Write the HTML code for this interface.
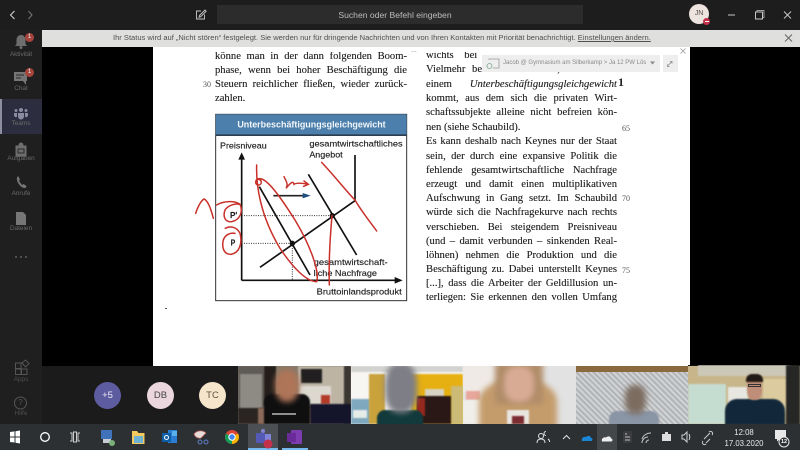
<!DOCTYPE html>
<html lang="de"><head><meta charset="utf-8"><title>Teams</title>
<style>
html,body{margin:0;padding:0;width:800px;height:450px;overflow:hidden;background:#1c1b1b}
*{box-sizing:border-box}
body{font-family:"Liberation Sans",sans-serif;position:relative}
.a{position:absolute}
.l{position:absolute;font-family:"Liberation Serif",serif;font-size:10.6px;line-height:14px;height:14px;color:#1c1c1c;white-space:nowrap;text-align:justify;text-align-last:justify;-webkit-text-stroke:.12px #1c1c1c}
.n{text-align:left;text-align-last:left}
.num{position:absolute;font-family:"Liberation Serif",serif;font-size:8px;color:#555;line-height:10px}
.nav{position:absolute;left:0;width:42px;text-align:center;font-size:6.4px;color:#6b6a6a;line-height:8px}
.av{position:absolute;top:382px;width:27px;height:27px;border-radius:50%;text-align:center;line-height:27px;font-size:9.5px;color:#444}
.tile{position:absolute;top:366px;height:58px;overflow:hidden}
.b{position:absolute;filter:blur(.8px)}
.bb{position:absolute;filter:blur(3px)}
svg{position:absolute;overflow:visible}
</style></head><body>

<!-- top bar -->
<div class="a" style="left:0;top:0;width:800px;height:30px;background:#1e1d1d"></div>
<div class="a" style="left:217px;top:5px;width:366px;height:19px;background:#2d2c2c"></div>
<div class="a" style="left:212px;top:5px;width:366px;height:19px;text-align:center;line-height:20px;font-size:8.6px;color:#bdbcbc">Suchen oder Befehl eingeben</div>
<svg style="left:0;top:0" width="800" height="30" fill="none" stroke="#c8c8c8">
<path d="M14.500 11 10.500 15 14.500 19" stroke="#d8d8d8"/><path d="M28.500 11 32 15 28.500 19" stroke="#777"/>
<path d="M201 11h-4.500v8h8v-4.500M199.500 15.500l5.500-5.500 1.200 1.200-5.500 5.500-1.700.5z" stroke-width=".9"/>
<path d="M728 15h7" stroke-width="1"/><path d="M755.500 12h7v7h-7z" stroke-width="1"/><path d="M757 12v-1.500h7v7h-1.500" stroke-width=".7"/>
<path d="M784 11.500l7 7M791 11.500l-7 7" stroke-width="1"/>
</svg>
<div class="a" style="left:689px;top:4px;width:20px;height:20px;border-radius:50%;background:#ede3df;text-align:center;line-height:20px;font-size:7px;color:#5a4a45">JN</div>
<div class="a" style="left:703px;top:18px;width:7px;height:7px;border-radius:50%;background:#c4314b"></div>
<div class="a" style="left:704.500px;top:21px;width:4px;height:1px;background:#fff"></div>

<!-- sidebar -->
<div class="a" style="left:0;top:30px;width:42px;height:394px;background:#201f1f"></div>
<div class="a" style="left:0;top:99px;width:42px;height:35px;background:#2c2d3f"></div>
<div class="a" style="left:0;top:99px;width:2px;height:35px;background:#8e8e9e"></div>
<svg style="left:0;top:0" width="42" height="424">
<path d="M21 35c-3 0-4.500 2.500-4.500 5v4l-1.500 2h12l-1.500-2v-4c0-2.500-1.500-5-4.500-5z" fill="#6f6e6e"/><circle cx="21" cy="47.500" r="1.500" fill="#6f6e6e"/>
<path d="M14 72h13v9h-1v4l-3-4h-9z" fill="#767575"/><path d="M16 75h8M16 78h5" stroke="#2a2929"/>
<g fill="#8a8aa0"><circle cx="21" cy="110" r="2"/><circle cx="16" cy="110.500" r="1.500"/><circle cx="26" cy="110.500" r="1.500"/><path d="M18 113h6v3.500a3 3 0 0 1-6 0zM14 113h3v3.500l-1 1-2-1.500zM25 113h3v3l-2 1.500-1-1z"/></g>
<path d="M16 146h10v10h-10zM19 146c0-4 4-4 4 0" fill="#6f6e6e" stroke="#6f6e6e"/><rect x="18" y="149" width="6" height="4" fill="none" stroke="#2a2929"/>
<path d="M17 178c-1 3 3 9 7 10 2 0 2.500-1 2.500-2l-3-2-1.500 1-3-4 1-1.500-1.500-3c-.5-.5-1.500 0-1.500 1.500z" fill="#767575"/>
<path d="M16 212h7l3 3v10h-10z" fill="#777676"/>
<g fill="#5f5e5e"><circle cx="16" cy="257" r="1"/><circle cx="21" cy="257" r="1"/><circle cx="26" cy="257" r="1"/></g>
<g fill="none" stroke="#555"><path d="M15.500 363h5.500v5.500h-5.500zM15.500 369h5.500v5.500h-5.500zM21.500 369h5.500v5.500h-5.500zM22 363l3.500-3 3.500 3.500-3.500 3.500z"/><circle cx="20.500" cy="403" r="6"/></g>
</svg>
<div class="nav" style="top:51px">Aktivität</div>
<div class="nav" style="top:85px">Chat</div>
<div class="nav" style="top:120px">Teams</div>
<div class="nav" style="top:155px">Aufgaben</div>
<div class="nav" style="top:190px">Anrufe</div>
<div class="nav" style="top:225px">Dateien</div>
<div class="nav" style="top:376px;color:#4f4e4e">Apps</div>
<div class="nav" style="top:410px;color:#4f4e4e">Hilfe</div>
<div class="a" style="left:25px;top:33px;width:9px;height:9px;border-radius:50%;background:#a5453c;color:#eee;font-size:6px;line-height:9px;text-align:center">1</div>
<div class="a" style="left:25px;top:68px;width:9px;height:9px;border-radius:50%;background:#a5453c;color:#eee;font-size:6px;line-height:9px;text-align:center">1</div>
<div class="a" style="left:16.500px;top:398px;color:#555;font-size:8px;width:8px;text-align:center;line-height:10px">?</div>

<!-- main -->
<div class="a" style="left:42px;top:47px;width:758px;height:319px;background:#000"></div>
<div class="a" style="left:153px;top:47px;width:537px;height:319px;background:#fff"></div>

<!-- page text, left column -->
<div class="l" style="left:215px;top:50px;width:192px">könne man in der dann folgenden Boom-</div>
<div class="l" style="left:215px;top:64px;width:192px">phase, wenn bei hoher Beschäftigung die</div>
<div class="l" style="left:215px;top:78px;width:192px">Steuern reichlicher fließen, wieder zurück-</div>
<div class="l n" style="left:215px;top:92px;width:192px">zahlen.</div>
<div class="num" style="left:203px;top:80px">30</div>

<!-- page text, right column -->
<div class="l n" style="left:426px;top:49px;width:60px;word-spacing:8px">wichts bei</div>
<div class="l" style="left:426px;top:63px;width:191px">Vielmehr besteht die Gefahr, dass es zu</div>
<div class="l" style="left:426px;top:78px;width:191px">einem <i>Unterbeschäftigungsgleichgewicht</i></div>
<div class="a" style="left:618px;top:75px;font-family:'Liberation Serif',serif;font-weight:bold;font-size:12px;color:#222">1</div>
<div class="l" style="left:426px;top:92px;width:191px">kommt, aus dem sich die privaten Wirt-</div>
<div class="l" style="left:426px;top:106px;width:191px">schaftssubjekte alleine nicht befreien kön-</div>
<div class="l n" style="left:426px;top:121px;width:191px">nen (siehe Schaubild).</div>
<div class="num" style="left:622px;top:124px">65</div>
<div class="l" style="left:426px;top:135px;width:191px">Es kann deshalb nach Keynes nur der Staat</div>
<div class="l" style="left:426px;top:150px;width:191px">sein, der durch eine expansive Politik die</div>
<div class="l" style="left:426px;top:164px;width:191px">fehlende gesamtwirtschaftliche Nachfrage</div>
<div class="l" style="left:426px;top:178px;width:191px">erzeugt und damit einen multiplikativen</div>
<div class="l" style="left:426px;top:192px;width:191px">Aufschwung in Gang setzt. Im Schaubild</div>
<div class="num" style="left:622px;top:194px">70</div>
<div class="l" style="left:426px;top:206px;width:191px">würde sich die Nachfragekurve nach rechts</div>
<div class="l" style="left:426px;top:221px;width:191px">verschieben. Bei steigendem Preisniveau</div>
<div class="l" style="left:426px;top:235px;width:191px">(und – damit verbunden – sinkenden Real-</div>
<div class="l" style="left:426px;top:249px;width:191px">löhnen) nehmen die Produktion und die</div>
<div class="l" style="left:426px;top:263px;width:191px">Beschäftigung zu. Dabei unterstellt Keynes</div>
<div class="num" style="left:622px;top:266px">75</div>
<div class="l" style="left:426px;top:277px;width:191px">[...], dass die Arbeiter der Geldillusion un-</div>
<div class="l" style="left:426px;top:291px;width:191px">terliegen: Sie erkennen den vollen Umfang</div>

<!-- clip of first lines -->
<div class="a" style="left:200px;top:47px;width:300px;height:5px;background:#fff"></div>

<!-- status bar -->
<div class="a" style="left:42px;top:30px;width:758px;height:17px;background:#dfdfdd"></div>
<div class="a" style="left:113px;top:30px;height:17px;line-height:16px;font-size:7.55px;color:#505050;white-space:nowrap">Ihr Status wird auf „Nicht stören“ festgelegt. Sie werden nur für dringende Nachrichten und von Ihren Kontakten mit Priorität benachrichtigt. <u>Einstellungen ändern.</u></div>
<svg style="left:783px;top:32px" width="12" height="12" fill="none" stroke="#666"><path d="M2 2.500l7 7M9 2.500l-7 7"/></svg>

<!-- share pill -->
<div class="a" style="left:482px;top:55px;width:178px;height:17px;background:#eeeeee"></div>
<div class="a" style="left:663px;top:55px;width:15px;height:17px;background:#eeeeee"></div>
<div class="a" style="left:503px;top:55px;height:17px;line-height:17px;font-size:6px;color:#8a8a8a;white-space:nowrap">Jacob @ Gymnasium am Silberkamp &gt; Ja 12 PW Lös</div>
<svg style="left:482px;top:55px" width="200" height="17" fill="none" stroke="#9a9a9a" stroke-width=".8">
<path d="M7 5V4h10v9h-6"/><circle cx="7.500" cy="11" r="2.500" stroke="#7aa88a"/>
<path d="M168 6.500h5l-2.500 3z" fill="#888" stroke="none"/><path d="M186 10.500l3.500-3.500M188 6.500h2v2M185.500 9.500v2h2" stroke="#888"/>
</svg>
<svg style="left:679px;top:47px" width="8" height="8" fill="none" stroke="#999" stroke-width=".8"><path d="M1.500 1.500l5 5M6.500 1.500l-5 5"/></svg>
<div class="a" style="left:411px;top:47px;font-size:7px;color:#777;line-height:8px">...</div>

<!-- chart -->
<svg style="left:180px;top:105px" width="240" height="205" viewBox="0 0 720 615">
<rect x="107" y="28" width="573" height="559" fill="#fff" stroke="#333" stroke-width="3"/>
<rect x="107" y="28" width="573" height="64" fill="#4c7fac"/>
<rect x="107" y="88" width="573" height="5" fill="#2d3e50"/>
<text x="172" y="68" font-family="Liberation Sans" font-weight="bold" font-size="27" fill="#f2f6f8" textLength="445" lengthAdjust="spacingAndGlyphs">Unterbeschäftigungsgleichgewicht</text>
<g font-family="Liberation Sans" font-size="25" fill="#1c1c1c" stroke="#1c1c1c" stroke-width=".4">
<text x="120" y="130" textLength="140" lengthAdjust="spacingAndGlyphs">Preisniveau</text>
<text x="388" y="124" textLength="280" lengthAdjust="spacingAndGlyphs">gesamtwirtschaftliches</text>
<text x="388" y="158" textLength="100" lengthAdjust="spacingAndGlyphs">Angebot</text>
<text x="401" y="480" textLength="222" lengthAdjust="spacingAndGlyphs">gesamtwirtschaft-</text>
<text x="401" y="513" textLength="190" lengthAdjust="spacingAndGlyphs">liche Nachfrage</text>
<text x="410" y="569" textLength="255" lengthAdjust="spacingAndGlyphs">Bruttoinlandsprodukt</text>
<text x="150" y="339" font-weight="bold" font-size="25" textLength="22" lengthAdjust="spacingAndGlyphs">P'</text>
<text x="152" y="422" font-weight="bold" font-size="25" textLength="14" lengthAdjust="spacingAndGlyphs">P</text>
</g>
<g fill="none" stroke="#111" stroke-width="5">
<path d="M185 526V160M185 526H650"/>
<path d="M240 487 525 287V150"/>
<path d="M238 245 390 510"/>
<path d="M385 208 530 450"/>
</g>
<path d="M185 142l-10 22h20zM668 526l-24-10v20z" fill="#111"/>
<path d="M185 332H457M185 415H337M337 415V525" stroke="#333" stroke-width="3" stroke-dasharray="3 4" fill="none"/>
<path d="M280 272H372" stroke="#222" stroke-width="5"/><path d="M392 272l-24-8v16z" fill="#1f4e80"/>
<circle cx="337" cy="415" r="8" fill="#111"/><circle cx="457" cy="332" r="8" fill="#111"/>
<g fill="none" stroke="#c9302a" stroke-width="4.500" stroke-linecap="round">
<path d="M230 180C228 240 240 330 300 430 340 490 380 530 410 530 420 500 390 420 345 345 310 290 270 230 245 222 225 215 222 240 235 240 245 240 250 225 232 222"/>
<path d="M425 172C470 220 500 260 525 285 545 320 570 350 590 378"/>
<path d="M456 332C450 400 446 480 448 540"/>
<path d="M312 215C320 230 325 240 318 250 330 235 340 225 342 238 350 232 370 235 385 238M372 228l13 10-14 6"/>
<path d="M100 340C90 300 80 285 72 282 60 290 52 310 47 325"/>
<path d="M110 300C130 288 165 286 180 298 190 320 180 345 155 350 135 352 128 335 135 315 145 300 165 295 180 298"/>
<path d="M136 370C150 362 170 365 180 385 188 415 178 445 152 448 130 448 125 425 130 405 135 390 150 382 165 385"/>
</g>
</svg>
<div class="a" style="left:165px;top:308px;width:2px;height:1px;background:#555"></div>

<!-- avatars -->
<div class="av" style="left:94px;background:#5e5ca0;color:#eceaf5">+5</div>
<div class="av" style="left:147px;background:#ead6dc">DB</div>
<div class="av" style="left:199px;background:#f5e5cb;color:#5e5340">TC</div>

<!-- tile 1 -->
<div class="tile" style="left:238px;width:113px;background:#857a6a">
<div class="b" style="left:0;top:0;width:26px;height:45px;background:#5e5a55"></div>
<div class="b" style="left:2px;top:8px;width:22px;height:36px;background:#8e8b85"></div>
<div class="b" style="left:26px;top:0;width:12px;height:40px;background:#231e1b"></div>
<div class="b" style="left:60px;top:0;width:47px;height:40px;background:#bdb4a4"></div>
<div class="b" style="left:106px;top:0;width:7px;height:58px;background:#3a3632"></div>
<div class="b" style="left:63px;top:3px;width:21px;height:14px;background:#211f1f"></div>
<div class="b" style="left:62px;top:20px;width:31px;height:18px;background:#dcd8d0"></div>
<div class="b" style="left:83px;top:29px;width:9px;height:9px;background:#b33b28"></div>
<div class="b" style="left:72px;top:38px;width:41px;height:20px;background:#14142a"></div>
<div class="b" style="left:0;top:42px;width:26px;height:16px;background:#2a2422"></div>
<div class="b" style="left:20px;top:42px;width:8px;height:16px;background:#8a6a58"></div>
<div class="b" style="left:63px;top:42px;width:9px;height:16px;background:#8a6a58"></div>
<div class="b" style="left:26px;top:28px;width:46px;height:30px;border-radius:8px 8px 0 0;background:#0f0f10"></div>
<div class="bb" style="left:37px;top:3px;width:24px;height:33px;border-radius:45%;background:#ae7558"></div>
<div class="a" style="left:34px;top:47px;width:24px;height:2px;background:#8f8f8f"></div>
</div>
<!-- tile 2 -->
<div class="tile" style="left:351px;width:112px;background:#f8f6f2">
<div class="b" style="left:0;top:0;width:112px;height:6px;background:#d2d2d0"></div>
<div class="b" style="left:0;top:33px;width:19px;height:25px;background:#7fa8bf"></div>
<div class="b" style="left:2px;top:44px;width:14px;height:8px;background:#e5ece8"></div>
<div class="b" style="left:18px;top:8px;width:16px;height:50px;background:#c9a23c"></div>
<div class="b" style="left:60px;top:8px;width:52px;height:50px;background:#e6b012"></div>
<div class="b" style="left:74px;top:23px;width:19px;height:28px;background:#d8d4c4"></div>
<div class="b" style="left:100px;top:20px;width:12px;height:38px;background:#cbbb76"></div>
<div class="b" style="left:66px;top:30px;width:34px;height:28px;background:#2a1816"></div>
<div class="b" style="left:66px;top:32px;width:8px;height:18px;background:#96281e"></div>
<div class="b" style="left:26px;top:44px;width:46px;height:20px;border-radius:8px 8px 0 0;background:#123a3c"></div>
<div class="bb" style="left:34px;top:-3px;width:32px;height:50px;border-radius:40%;background:#7d7e86"></div>
</div>
<!-- tile 3 -->
<div class="tile" style="left:463px;width:113px;background:#e2e2e2">
<div class="b" style="left:0;top:0;width:40px;height:26px;background:#efeae6"></div>
<div class="b" style="left:3px;top:25px;width:14px;height:9px;background:#e8a79c"></div>
<div class="b" style="left:0;top:34px;width:22px;height:24px;background:#f1efea"></div>
<div class="bb" style="left:16px;top:14px;width:78px;height:54px;border-radius:40% 40% 0 0;background:#c49c6c"></div>
<div class="bb" style="left:32px;top:-4px;width:48px;height:42px;background:#b08c68"></div>
<div class="bb" style="left:41px;top:0;width:30px;height:36px;border-radius:40%;background:#d8ab95"></div>
<div class="b" style="left:44px;top:44px;width:22px;height:14px;background:#e9e5e0"></div>
<div class="b" style="left:49px;top:50px;width:12px;height:8px;background:#7c2c30"></div>
</div>
<!-- tile 4 -->
<div class="tile" style="left:576px;width:112px;background:#c4c6c8">
<div class="a" style="left:0;top:0;width:112px;height:6px;background:#8a6a3c"></div>
<div class="a" style="left:0;top:6px;width:112px;height:52px;background:repeating-linear-gradient(45deg,#b2b5b8 0 2px,#d0d2d4 2px 4px)"></div>
<div class="b" style="left:33px;top:45px;width:50px;height:15px;border-radius:8px 8px 0 0;background:#8a95a5"></div>
<div class="bb" style="left:49px;top:19px;width:21px;height:29px;border-radius:40%;background:#7c6c60"></div>
</div>
<!-- tile 5 -->
<div class="tile" style="left:688px;top:365px;height:59px;width:112px;background:#c8b68a">
<div class="a" style="left:0;top:0;width:112px;height:1px;background:#111"></div>
<div class="b" style="left:10px;top:0;width:92px;height:11px;background:#ccc8b8"></div>
<div class="b" style="left:0;top:19px;width:38px;height:40px;background:#c5dcd0"></div>
<div class="b" style="left:40px;top:22px;width:20px;height:38px;background:#e8e6e0"></div>
<div class="b" style="left:75px;top:14px;width:24px;height:34px;background:#dccb9e"></div>
<div class="b" style="left:98px;top:0;width:14px;height:60px;background:#262624"></div>
<div class="b" style="left:37px;top:34px;width:60px;height:26px;border-radius:12px 12px 0 0;background:#12283a"></div>
<div class="b" style="left:59px;top:11px;width:15px;height:24px;border-radius:40%;background:#c08e78"></div>
<div class="b" style="left:58px;top:9px;width:17px;height:8px;border-radius:6px 6px 0 0;background:#221a16"></div>
<div class="a" style="left:60px;top:19px;width:13px;height:3px;border:1px solid #333"></div>
</div>

<!-- taskbar -->
<div class="a" style="left:0;top:424px;width:800px;height:26px;background:#2c3033"></div>
<div class="a" style="left:248px;top:424px;width:30px;height:26px;background:#4c5054"></div>
<div class="a" style="left:248px;top:448px;width:30px;height:2px;background:#76b9ed"></div>
<div class="a" style="left:282px;top:448px;width:26px;height:2px;background:#76b9ed"></div>
<div class="a" style="left:597px;top:424px;width:20px;height:26px;background:#43474a"></div>
<svg style="left:0;top:424px" width="800" height="26">
<path d="M10 8l4.500-.6V12.500H10zM15.500 7.200 20 6.500V12.500h-4.500zM10 13.500h4.500v5L10 18zM15.500 13.500H20v6l-4.500-.7z" fill="#fff"/>
<circle cx="45" cy="13" r="4.300" fill="none" stroke="#fff" stroke-width="1.300"/>
<path d="M70 9h2v8h-2M80 9h-2v8h2M73.500 8h3v10h-3z" fill="none" stroke="#ccc"/>
<rect x="101" y="6" width="11" height="9" fill="#3f72b8"/><rect x="103" y="15" width="8" height="4" fill="#c7cdd4"/><circle cx="112" cy="19" r="3" fill="#7ab07a"/>
<path d="M132 7h5l1.500 2h6v11h-12.500z" fill="#f4c95d"/><rect x="134" y="12" width="9" height="7" fill="#6fb2d4"/>
<rect x="168" y="6" width="9" height="13" fill="#2b7cd3"/><rect x="162" y="9" width="9" height="9" fill="#0f5fa8"/><circle cx="166.500" cy="13.500" r="2" fill="none" stroke="#fff"/><rect x="172" y="7" width="5" height="5" fill="#59b2ea"/>
<path d="M194 10c3-4 9-4 12-1l-5 5c-3 1-6-1-7-4z" fill="#e8dcd8" stroke="#b35a5a" stroke-width=".8"/><circle cx="200" cy="18" r="2" fill="none" stroke="#5f7ec6"/><circle cx="206" cy="18" r="2" fill="none" stroke="#5f7ec6"/>
<circle cx="232" cy="13" r="7" fill="#db4437"/><path d="M232 13 238 9.500A7 7 0 0 1 232 20z" fill="#f4b400"/><path d="M232 20A7 7 0 0 1 226 9.500L232 13z" fill="#0f9d58"/><circle cx="232" cy="13" r="3.200" fill="#4285f4" stroke="#fff"/>
<rect x="256" y="9" width="9" height="10" rx="1" fill="#5459b5"/><circle cx="263" cy="7" r="2" fill="#7f84d6"/><rect x="265" y="10" width="6" height="7" fill="#7f84d6"/><circle cx="268" cy="20" r="4.500" fill="#c4314b"/>
<rect x="291" y="6" width="11" height="14" rx="1" fill="#7d3db0"/><rect x="287" y="9" width="9" height="9" fill="#6a2a9a"/>
<path d="M537 19c0-3 2-4 4-4s4 1 4 4M541 14.500a2.500 2.500 0 1 0 0-5 2.500 2.500 0 0 0 0 5zM546 7.500a2 2 0 1 0 0 4M548 15c1 .5 1.500 1.500 1.500 3" fill="none" stroke="#e0e0e0"/>
<path d="M563 15l3.500-3.500L570 15" fill="none" stroke="#e0e0e0"/>
<path d="M582 17c-1-3 2-5 4-4 2-2 5-1 5 1 2 0 2 3 0 3z" fill="#1a86d8"/>
<path d="M602 17.500c-1-3 2-5 4-4 2-2 5-1 5 1 2 0 2 3 0 3z" fill="#eee"/>
<rect x="623" y="7" width="9" height="12" rx="1" fill="#3a3c3f"/><path d="M625 10h2M625 13h5M625 16h5" stroke="#bbb"/>
<path d="M642 19a6 6 0 0 1 6-6M642 15a9 9 0 0 1 9-6M646 19a3 3 0 0 1 3-3" fill="none" stroke="#c8c8c8"/>
<rect x="662" y="10" width="9" height="7" fill="#ddd"/><rect x="665" y="8" width="3" height="2" fill="#ddd"/>
<path d="M682 11h2l3-3v10l-3-3h-2zM689 10c1 2 1 4 0 6" fill="none" stroke="#d0d0d0"/>
<path d="M704 15l6-6M706 19l4-4M703 17a2 2 0 1 0 3 3M709 8a2 2 0 1 1 3 3" fill="none" stroke="#ccc"/>
<path d="M775 6h11v9h-6l-3 2.500v-2.500h-2z" fill="#e8e8e8"/><circle cx="784" cy="18" r="5" fill="#2c3033" stroke="#e8e8e8"/>
</svg>
<div class="a" style="left:780.500px;top:438px;width:7px;text-align:center;font-size:5.5px;line-height:8px;color:#fff;font-weight:bold">12</div>
<div class="a" style="left:719px;top:427px;width:50px;text-align:center;font-size:7.8px;line-height:11px;color:#e8e8e8">12:08</div>
<div class="a" style="left:719px;top:439px;width:50px;text-align:center;font-size:7.8px;line-height:10px;color:#e8e8e8">17.03.2020</div>

</body></html>
